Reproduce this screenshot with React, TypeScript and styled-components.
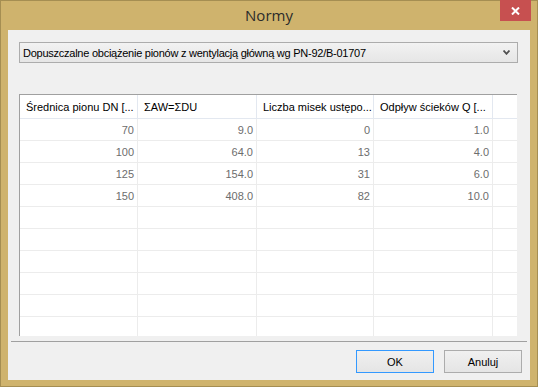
import styled, { createGlobalStyle } from 'styled-components'

const GlobalStyle = createGlobalStyle`
  html, body {
    margin: 0;
    padding: 0;
    background: #ffffff;
  }
  * {
    box-sizing: border-box;
  }
`

const columns = [
  'Średnica pionu DN [...',
  'ΣAW=ΣDU',
  'Liczba misek ustępo...',
  'Odpływ ścieków Q [...',
  '',
]

const rows = [
  ['70', '9.0', '0', '1.0'],
  ['100', '64.0', '13', '4.0'],
  ['125', '154.0', '31', '6.0'],
  ['150', '408.0', '82', '10.0'],
]

const emptyRows = 7

const Window = styled.div`
  width: 538px;
  height: 387px;
  border: 1px solid #a58e52;
  background: #cfb36d;
  display: flex;
  flex-direction: column;
  padding: 0 7px 8px 7px;
  font-family: "Liberation Sans", Arial, sans-serif;
`

const TitleBar = styled.div`
  height: 29px;
  display: flex;
  align-items: flex-start;
  justify-content: center;
  position: relative;
`

const Title = styled.span`
  font-family: "Open Sans", "Noto Sans", sans-serif;
  font-size: 15px;
  color: #2b2b2b;
  line-height: 29px;
`

const CloseButton = styled.div`
  position: absolute;
  top: -1px;
  right: -1px;
  width: 31px;
  height: 21px;
  background: #c75050;
  display: flex;
  align-items: center;
  justify-content: center;
`

const Client = styled.div`
  flex: 1;
  background: #f0f0f0;
  display: flex;
  flex-direction: column;
  padding: 12px 3px 7px 3px;
`

const Combo = styled.div`
  margin: 0 9px 0 8px;
  height: 21px;
  border: 1px solid #acacac;
  background: linear-gradient(#f2f2f2, #e6e6e6);
  display: flex;
  align-items: center;
  justify-content: space-between;
  padding: 0 7px 0 3px;
  font-size: 11px;
  letter-spacing: -0.25px;
  color: #000;
`

const Grid = styled.div`
  margin: 31px 10px 0 8px;
  height: 242px;
  background: #ffffff;
  border-top: 1px solid #a0a0a0;
  border-left: 1px solid #a0a0a0;
  overflow: hidden;
`

const Row = styled.div`
  display: grid;
  grid-template-columns: 118px 119px 117px 119px 1fr;
`

const HeaderCell = styled.div<{ $last?: boolean }>`
  height: 24px;
  padding: 0 6px;
  border-bottom: 1px solid #e3e8f0;
  border-right: ${p => (p.$last ? 'none' : '1px solid #e3e8f0')};
  display: flex;
  align-items: center;
  font-size: 11px;
  color: #000;
  white-space: nowrap;
  overflow: hidden;
`

const Cell = styled.div<{ $last?: boolean }>`
  height: 22px;
  padding: 0 3px;
  border-bottom: 1px solid #ececec;
  border-right: ${p => (p.$last ? 'none' : '1px solid #ececec')};
  display: flex;
  align-items: center;
  justify-content: flex-end;
  font-size: 11px;
  color: #6d6d6d;
`

const Separator = styled.div`
  margin-top: 5px;
  height: 1px;
  background: #a0a0a0;
`

const Buttons = styled.div`
  margin-top: 8px;
  display: flex;
  justify-content: flex-end;
  gap: 10px;
  padding-right: 5px;
`

const Button = styled.div<{ $focused?: boolean }>`
  width: 78px;
  height: 23px;
  border: 1px solid ${p => (p.$focused ? '#3399ff' : '#acacac')};
  background: linear-gradient(#f0f0f0, #e5e5e5);
  display: flex;
  align-items: center;
  justify-content: center;
  font-size: 11px;
  color: #000;
`

export default function App() {
  return (
    <>
      <GlobalStyle />
      <Window>
        <TitleBar>
          <Title>Normy</Title>
          <CloseButton>
            <svg width="9" height="8" viewBox="0 0 9 8">
              <path d="M1 0.5 L8 7.5 M8 0.5 L1 7.5" stroke="#fff" strokeWidth="2" />
            </svg>
          </CloseButton>
        </TitleBar>
        <Client>
          <Combo>
            <span>Dopuszczalne obciążenie pionów z wentylacją główną wg PN-92/B-01707</span>
            <svg width="7" height="5" viewBox="0 0 7 5">
              <path d="M0.5 0.5 L3.5 3.8 L6.5 0.5" stroke="#505050" strokeWidth="1.8" fill="none" />
            </svg>
          </Combo>
          <Grid>
            <Row>
              {columns.map((c, i) => (
                <HeaderCell key={i} $last={i === columns.length - 1}>{c}</HeaderCell>
              ))}
            </Row>
            {rows.map((r, i) => (
              <Row key={i}>
                {r.map((v, j) => <Cell key={j}>{v}</Cell>)}
                <Cell $last />
              </Row>
            ))}
            {Array.from({ length: emptyRows }).map((_, i) => (
              <Row key={'e' + i}>
                <Cell /><Cell /><Cell /><Cell /><Cell $last />
              </Row>
            ))}
          </Grid>
          <Separator />
          <Buttons>
            <Button $focused>OK</Button>
            <Button>Anuluj</Button>
          </Buttons>
        </Client>
      </Window>
    </>
  )
}
